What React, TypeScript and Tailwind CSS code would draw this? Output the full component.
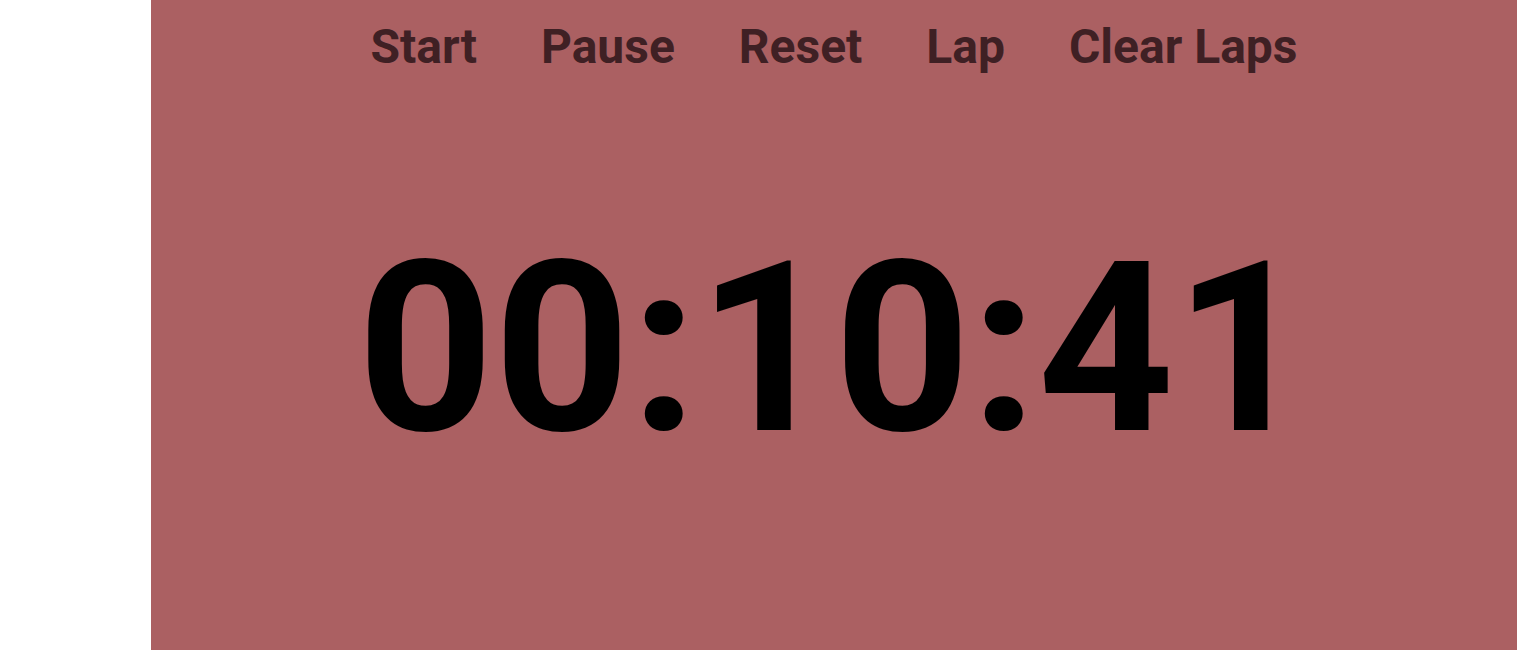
export default function App() {
  const buttons = ["Start", "Pause", "Reset", "Lap", "Clear Laps"];
  return (
    <div className="flex h-[650px] w-full bg-white overflow-hidden" style={{ fontFamily: "Roboto, sans-serif" }}>
      <div className="w-[151px] shrink-0" />
      <div className="flex-1 bg-[#ab6062] flex flex-col items-center">
        <div className="flex items-center gap-[64px] pt-[17px]">
          {buttons.map((b) => (
            <button key={b} className="text-[48px] leading-[60px] font-bold text-[#3f2024]">
              {b}
            </button>
          ))}
        </div>
        <div className="mt-[132px] text-[238px] leading-[280px] font-bold text-black">00:10:41</div>
      </div>
      <div className="w-[14px] shrink-0" />
    </div>
  );
}
